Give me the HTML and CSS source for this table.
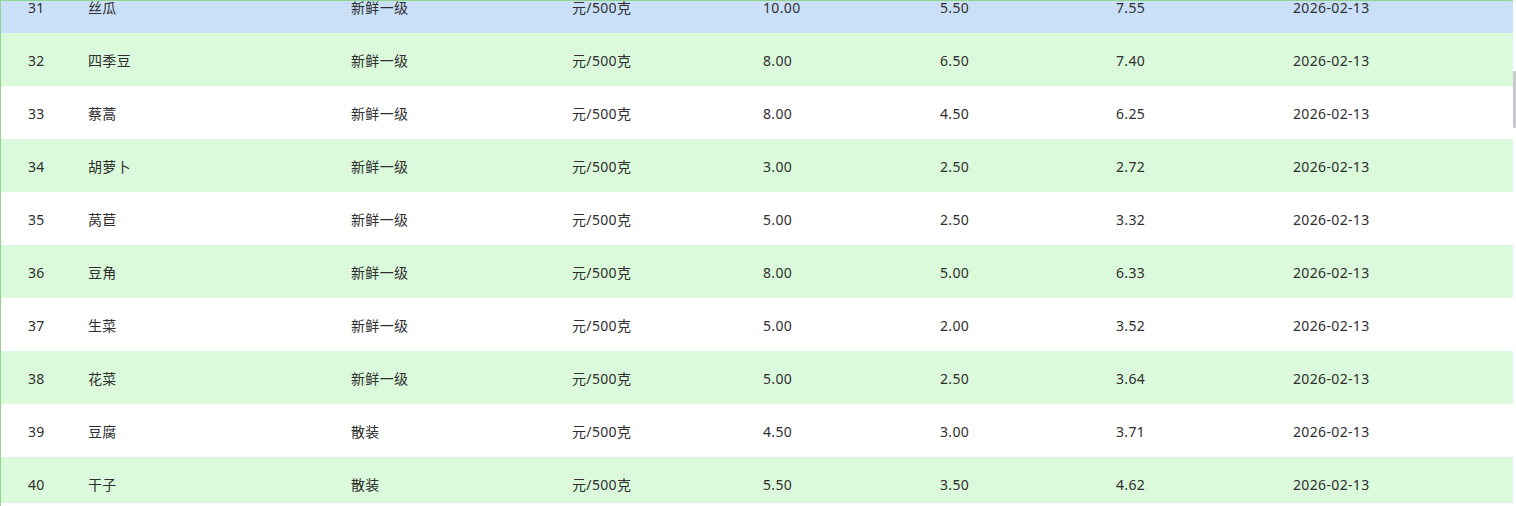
FILE: index.html
```html
<!DOCTYPE html>
<html lang="zh">
<head>
<meta charset="utf-8">
<title>价格表</title>
<link rel="stylesheet" href="styles.css">
</head>
<body>
<div class="page">
  <div class="frame">
    <div class="viewport">
      <div class="table">
        <div class="row sel"><span>31</span><span>丝瓜</span><span>新鲜一级</span><span>元/500克</span><span>10.00</span><span>5.50</span><span>7.55</span><span>2026-02-13</span></div>
        <div class="row alt"><span>32</span><span>四季豆</span><span>新鲜一级</span><span>元/500克</span><span>8.00</span><span>6.50</span><span>7.40</span><span>2026-02-13</span></div>
        <div class="row"><span>33</span><span>蔡蒿</span><span>新鲜一级</span><span>元/500克</span><span>8.00</span><span>4.50</span><span>6.25</span><span>2026-02-13</span></div>
        <div class="row alt"><span>34</span><span>胡萝卜</span><span>新鲜一级</span><span>元/500克</span><span>3.00</span><span>2.50</span><span>2.72</span><span>2026-02-13</span></div>
        <div class="row"><span>35</span><span>莴苣</span><span>新鲜一级</span><span>元/500克</span><span>5.00</span><span>2.50</span><span>3.32</span><span>2026-02-13</span></div>
        <div class="row alt"><span>36</span><span>豆角</span><span>新鲜一级</span><span>元/500克</span><span>8.00</span><span>5.00</span><span>6.33</span><span>2026-02-13</span></div>
        <div class="row"><span>37</span><span>生菜</span><span>新鲜一级</span><span>元/500克</span><span>5.00</span><span>2.00</span><span>3.52</span><span>2026-02-13</span></div>
        <div class="row alt"><span>38</span><span>花菜</span><span>新鲜一级</span><span>元/500克</span><span>5.00</span><span>2.50</span><span>3.64</span><span>2026-02-13</span></div>
        <div class="row"><span>39</span><span>豆腐</span><span>散装</span><span>元/500克</span><span>4.50</span><span>3.00</span><span>3.71</span><span>2026-02-13</span></div>
        <div class="row alt"><span>40</span><span>干子</span><span>散装</span><span>元/500克</span><span>5.50</span><span>3.50</span><span>4.62</span><span>2026-02-13</span></div>
      </div>
    </div>
  </div>
  <div class="scrollbar"><div class="thumb"></div></div>
</div>
</body>
</html>
```
FILE: styles.css
```css
html, body {
  margin: 0;
  padding: 0;
  background: #ffffff;
}
body {
  font-family: "Noto Sans", "Noto Sans CJK SC", sans-serif;
  font-size: 14px;
  color: #2f2f2f;
  letter-spacing: 0.35px;
}
.page {
  display: flex;
  width: 1516px;
  height: 506px;
  overflow: hidden;
}
.frame {
  flex: 1;
  border-left: 1px solid #8ed68e;
  border-top: 1px solid #8ed68e;
  height: 505px;
}
.viewport {
  height: 502px;
  overflow: hidden;
}
.table {
  margin-top: -21px;
}
.row {
  display: grid;
  grid-template-columns: 60px 263px 221px 191px 177px 176px 177px 1fr;
  padding-left: 27px;
  padding-top: 1px;
  box-sizing: border-box;
  height: 53px;
  align-items: center;
  background: #ffffff;
  white-space: nowrap;
}
.row.alt {
  background: #dbf9db;
}
.row.sel {
  background: #cadff8;
}
.scrollbar {
  width: 3px;
  flex: none;
  background: #ffffff;
}
.thumb {
  margin-top: 71px;
  height: 57px;
  background: #c9c9cf;
  border-radius: 1px;
}
```
